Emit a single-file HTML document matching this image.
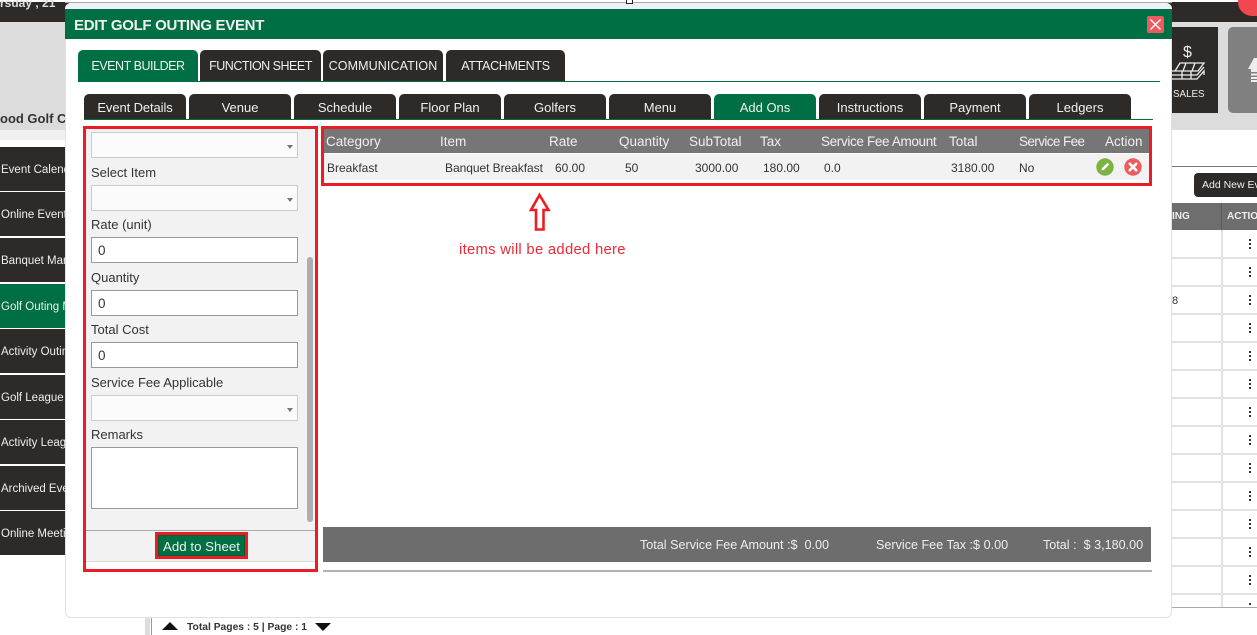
<!DOCTYPE html>
<html><head><meta charset="utf-8">
<style>
html,body{margin:0;padding:0;width:1257px;height:635px;overflow:hidden;background:#fff;font-family:"Liberation Sans",sans-serif;}
div,span,svg{position:absolute;box-sizing:border-box;}
.t{white-space:nowrap;line-height:1;}
.side{left:0;width:65px;height:44px;background:#2e2a27;color:#eee;font-size:11.5px;line-height:46px;white-space:nowrap;overflow:hidden;padding-left:1px;}
.tab1{top:50px;height:31px;background:#2e2a27;color:#f0f0f0;border-radius:5px 5px 0 0;font-size:12.5px;line-height:33px;text-align:center;white-space:nowrap;}
.tab2{top:94px;height:25px;width:102px;background:#2e2a27;color:#f0f0f0;border-radius:5px 5px 0 0;font-size:13px;line-height:27px;text-align:center;white-space:nowrap;}
.g{background:#006f44;}
.lab{left:91px;font-size:13px;color:#333;white-space:nowrap;line-height:1;}
.inp{left:91px;width:207px;height:26px;background:#fff;border:1px solid #999;font-size:13.5px;color:#333;line-height:26px;padding-left:6px;}
.sel{left:91px;width:207px;height:26px;background:#fbfbfb;border:1px solid #ccc;}
.sel:after{content:"";position:absolute;right:4px;top:12px;border-left:3px solid transparent;border-right:3px solid transparent;border-top:4px solid #777;}
.h{top:135px;font-size:13.5px;color:#f0f0f0;white-space:nowrap;line-height:1;}
.c{top:162px;font-size:12px;color:#333;white-space:nowrap;line-height:1;}
.s{top:539px;font-size:12.6px;color:#eee;white-space:nowrap;line-height:1;}
.hl{left:1172px;width:85px;height:2px;background:#e2e2e2;}
.dots{left:1249px;width:2px;height:10px;background:repeating-linear-gradient(#333 0 2px,transparent 2px 4px);}
</style></head><body>

<!-- background page -->
<div style="left:0;top:0;width:1257px;height:22px;background:#2e2a27"></div>
<div style="left:0;top:0;width:1257px;height:2px;background:#fff"></div>
<div class="t" style="left:0;top:-3px;font-size:12px;font-weight:bold;color:#ddd">rsday , 21</div>
<div style="left:0;top:22px;width:1257px;height:108px;background:#dcdcdc"></div>
<div style="left:0;top:130px;width:65px;height:10px;background:#f0f0f0"></div>
<div class="t" style="left:0;top:112px;font-size:13px;font-weight:bold;color:#333">ood Golf C</div>
<div class="side" style="top:147px">Event Calendar</div>
<div class="side" style="top:192px">Online Events</div>
<div class="side" style="top:238px">Banquet Manager</div>
<div class="side g" style="top:284px">Golf Outing Manager</div>
<div class="side" style="top:329px">Activity Outing</div>
<div class="side" style="top:375px">Golf League M</div>
<div class="side" style="top:420px">Activity League</div>
<div class="side" style="top:466px">Archived Events</div>
<div class="side" style="top:511px">Online Meeting</div>
<div style="left:0;top:555px;width:145px;height:80px;background:#fff"></div>
<div style="left:145px;top:618px;width:5px;height:17px;background:#ddd"></div>
<div style="left:151px;top:618px;width:1px;height:17px;background:#999"></div>
<div style="left:162px;top:622px;border-left:8px solid transparent;border-right:8px solid transparent;border-bottom:8px solid #111"></div>
<div class="t" style="left:187px;top:623px;font-size:10.3px;font-weight:bold;color:#333">Total Pages : 5 | Page : 1</div>
<div style="left:315px;top:623px;border-left:8px solid transparent;border-right:8px solid transparent;border-top:8px solid #111"></div>

<!-- right background -->
<div style="left:1238px;top:0;width:19px;height:16px;background:#f0484e;border-radius:0 0 0 14px"></div>
<div style="left:1172px;top:27px;width:46px;height:86px;background:#2e2a27"></div>
<div style="left:1228px;top:27px;width:29px;height:86px;background:#808080;border-radius:5px 0 0 5px"></div>
<div class="t" style="left:1183px;top:45px;font-size:16px;color:#eee">$</div>
<svg style="left:1172px;top:62px" width="34" height="19" viewBox="0 0 34 19" fill="none" stroke="#eee" stroke-width="1.3"><path d="M8 1H32L26 9H3ZM0 9H3M0 13H25L32 5M0 17H25L32 9V13M14 1L11 9M23 1L20 9M10 9V17M19 9V17"/></svg>
<div class="t" style="left:1173px;top:90px;font-size:9.8px;color:#eee">SALES</div>
<svg style="left:1248px;top:58px" width="9" height="24" viewBox="0 0 9 24" fill="#eee"><path d="M6 0L0 11H3V14H9V0ZM3 15.5H9V17.5H3ZM3 19H9V21H3ZM3 22H9V24H3Z"/></svg>
<div style="left:1172px;top:166px;width:85px;height:1px;background:#777"></div>
<div style="left:1194px;top:173px;width:63px;height:24px;background:#2e2a27;border-radius:4px 0 0 4px;color:#eee;font-size:10.5px;line-height:25px;padding-left:8px;white-space:nowrap;overflow:hidden">Add New Event</div>
<div style="left:1172px;top:203px;width:85px;height:27px;background:#6e6e6e"></div>
<div style="left:1221px;top:203px;width:1px;height:27px;background:#5a5a5a"></div>
<div class="t" style="left:1172px;top:212px;font-size:10px;font-weight:bold;color:#eee">ING</div>
<div class="t" style="left:1227px;top:212px;font-size:10px;font-weight:bold;color:#eee;width:30px;overflow:hidden">ACTION</div>
<div style="left:1221px;top:230px;width:2px;height:378px;background:#e2e2e2"></div>
<div class="hl" style="top:257px"></div><div class="hl" style="top:285px"></div><div class="hl" style="top:313px"></div><div class="hl" style="top:341px"></div><div class="hl" style="top:369px"></div><div class="hl" style="top:397px"></div><div class="hl" style="top:425px"></div><div class="hl" style="top:453px"></div><div class="hl" style="top:481px"></div><div class="hl" style="top:509px"></div><div class="hl" style="top:537px"></div><div class="hl" style="top:565px"></div><div class="hl" style="top:593px"></div>
<div style="left:1172px;top:607px;width:85px;height:1px;background:#aaa"></div>
<div class="t" style="left:1172px;top:296px;font-size:11px;color:#333">8</div>
<div class="dots" style="top:239px"></div><div class="dots" style="top:267px"></div><div class="dots" style="top:295px"></div><div class="dots" style="top:323px"></div><div class="dots" style="top:351px"></div><div class="dots" style="top:379px"></div><div class="dots" style="top:407px"></div><div class="dots" style="top:435px"></div><div class="dots" style="top:463px"></div><div class="dots" style="top:491px"></div><div class="dots" style="top:519px"></div><div class="dots" style="top:547px"></div><div class="dots" style="top:575px"></div><div class="dots" style="top:603px;height:4px"></div>

<!-- modal -->
<div style="left:65px;top:3px;width:1107px;height:615px;background:#fff;border-radius:6px;border:1px solid #e2e2e2;border-top:0"></div>
<div style="left:65px;top:3px;width:1107px;height:6px;background:#f0f0f8;border-radius:6px 6px 0 0"></div>
<div style="left:65px;top:2px;width:1107px;height:1px;background:#aaa"></div>
<div style="left:626px;top:0;width:7px;height:4px;background:#fff;border:1px solid #222;border-top:0"></div>
<div style="left:65px;top:9px;width:1107px;height:30px;background:#006f44"></div>
<div class="t" style="left:74px;top:18px;font-size:15px;font-weight:bold;color:#f2f2f2;letter-spacing:-.3px">EDIT GOLF OUTING EVENT</div>
<div style="left:1147px;top:16px;width:17px;height:17px;background:#ee5a5f;border-radius:2px"></div>
<svg style="left:1147px;top:16px" width="17" height="17" viewBox="0 0 17 17" fill="none" stroke="#fff" stroke-width="1.4"><path d="M3.5 3.5L13.5 13.5M13.5 3.5L3.5 13.5"/></svg>

<div class="tab1 g" style="left:78px;width:120px;letter-spacing:-.45px">EVENT BUILDER</div>
<div class="tab1" style="left:200px;width:121px;letter-spacing:-.5px">FUNCTION SHEET</div>
<div class="tab1" style="left:323px;width:120px;letter-spacing:.1px">COMMUNICATION</div>
<div class="tab1" style="left:446px;width:119px;letter-spacing:-.3px">ATTACHMENTS</div>
<div style="left:78px;top:81px;width:1082px;height:1px;background:#006f44"></div>

<div class="tab2" style="left:84px;letter-spacing:-.1px">Event Details</div>
<div class="tab2" style="left:189px">Venue</div>
<div class="tab2" style="left:294px">Schedule</div>
<div class="tab2" style="left:399px">Floor Plan</div>
<div class="tab2" style="left:504px">Golfers</div>
<div class="tab2" style="left:609px">Menu</div>
<div class="tab2 g" style="left:714px">Add Ons</div>
<div class="tab2" style="left:819px">Instructions</div>
<div class="tab2" style="left:924px">Payment</div>
<div class="tab2" style="left:1029px">Ledgers</div>
<div style="left:84px;top:119px;width:1069px;height:1px;background:#006f44"></div>

<!-- left panel -->
<div style="left:83px;top:126px;width:235px;height:446px;background:#f2f2f2;border:3px solid #ed1c24"></div>
<div class="sel" style="top:132px"></div>
<div class="lab" style="top:166px">Select Item</div>
<div class="sel" style="top:185px"></div>
<div class="lab" style="top:218px">Rate (unit)</div>
<div class="inp" style="top:237px">0</div>
<div class="lab" style="top:271px">Quantity</div>
<div class="inp" style="top:290px">0</div>
<div class="lab" style="top:323px">Total Cost</div>
<div class="inp" style="top:342px">0</div>
<div class="lab" style="top:376px">Service Fee Applicable</div>
<div class="sel" style="top:395px"></div>
<div class="lab" style="top:428px">Remarks</div>
<div class="inp" style="top:447px;height:62px"></div>
<div style="left:307px;top:257px;width:6px;height:265px;background:#aeaeae;border-radius:3px"></div>
<div style="left:86px;top:530px;width:229px;height:1px;background:#aaa"></div>
<div style="left:86px;top:561px;width:229px;height:1px;background:#d8d8d8"></div>
<div style="left:86px;top:562px;width:229px;height:7px;background:#fff"></div>
<div style="left:155px;top:532px;width:93px;height:27px;background:#006f44;border:3px solid #ed1c24;box-shadow:inset 0 0 0 1px #0a5a3a;color:#f0f0f0;font-size:13.3px;line-height:24px;text-align:center;white-space:nowrap">Add to Sheet</div>

<!-- right table -->
<div style="left:321px;top:126px;width:831px;height:60px;border:3px solid #ed1c24"></div>
<div style="left:324px;top:129px;width:825px;height:24px;background:#767676"></div>
<div style="left:324px;top:154px;width:825px;height:26px;background:#f2f2f2"></div>
<div class="h" style="left:326px">Category</div>
<div class="h" style="left:440px">Item</div>
<div class="h" style="left:549px">Rate</div>
<div class="h" style="left:619px">Quantity</div>
<div class="h" style="left:689px">SubTotal</div>
<div class="h" style="left:760px">Tax</div>
<div class="h" style="left:821px;letter-spacing:-.35px">Service Fee Amount</div>
<div class="h" style="left:949px">Total</div>
<div class="h" style="left:1019px;letter-spacing:-.6px">Service Fee</div>
<div class="h" style="left:1105px">Action</div>
<div class="c" style="left:327px">Breakfast</div>
<div class="c" style="left:445px;letter-spacing:-.05px">Banquet Breakfast</div>
<div class="c" style="left:555px">60.00</div>
<div class="c" style="left:625px">50</div>
<div class="c" style="left:695px">3000.00</div>
<div class="c" style="left:763px">180.00</div>
<div class="c" style="left:824px">0.0</div>
<div class="c" style="left:951px">3180.00</div>
<div class="c" style="left:1019px">No</div>
<svg style="left:1096px;top:158px" width="18" height="18" viewBox="0 0 18 18"><circle cx="9" cy="9" r="8.7" fill="#7cb342"/><path d="M5.5 12.5L6 10L11.5 4.8L13.2 6.5L8 11.8Z" fill="#fff"/></svg>
<svg style="left:1124px;top:158px" width="18" height="18" viewBox="0 0 18 18"><circle cx="9" cy="9" r="8.7" fill="#ef5a60"/><path d="M5.8 5.8L12.2 12.2M12.2 5.8L5.8 12.2" stroke="#fff" stroke-width="2.6" stroke-linecap="round"/></svg>

<svg style="left:528px;top:192px" width="24" height="40" viewBox="0 0 24 40" fill="none" stroke="#ed1c24" stroke-width="2.6"><path d="M11.5 3L20.5 18H15.5V37.5H8V18H3Z"/></svg>
<div class="t" style="left:459px;top:243px;font-size:14.8px;color:#ed2a35;letter-spacing:.3px">items will be added here</div>

<!-- summary -->
<div style="left:323px;top:527px;width:828px;height:35px;background:#6d6d6d"></div>
<div class="s" style="left:640px">Total Service Fee Amount :$&nbsp; 0.00</div>
<div class="s" style="left:876px">Service Fee Tax :$ 0.00</div>
<div class="s" style="left:1043px">Total :&nbsp; $ 3,180.00</div>
<div style="left:323px;top:570px;width:829px;height:2px;background:#b0b0b0"></div>

</body></html>
